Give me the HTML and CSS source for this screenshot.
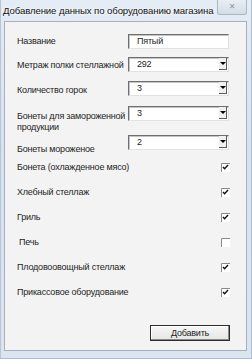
FILE: index.html
```html
<!DOCTYPE html>
<html lang="ru">
<head>
  <meta charset="UTF-8">
  <title>Добавление данных по оборудованию магазина</title>
  <link rel="stylesheet" href="styles.css">
</head>
<body>
  <div class="window">
    <div class="titlebar">
      <span class="title">Добавление данных по оборудованию магазина</span>
      <span class="close">✕</span>
    </div>
    <div class="client">
      <div class="field">
        <span class="label lbl-1">Название</span>
        <div class="textbox">Пятый</div>
      </div>
      <div class="field gap-8">
        <span class="label lbl-2">Метраж полки стеллажной</span>
        <div class="combo"><span class="value">292</span><span class="arrow"></span></div>
      </div>
      <div class="field gap-9">
        <span class="label lbl-3">Количество горок</span>
        <div class="combo"><span class="value">3</span><span class="arrow"></span></div>
      </div>
      <div class="field gap-10">
        <span class="label lbl-4">Бонеты для замороженной<br>продукции</span>
        <div class="combo"><span class="value">3</span><span class="arrow"></span></div>
      </div>
      <div class="field gap-14">
        <span class="label lbl-5">Бонеты мороженое</span>
        <div class="combo"><span class="value">2</span><span class="arrow"></span></div>
      </div>

      <div class="checks">
        <div class="check-row">
          <span class="label">Бонета (охлажденное мясо)</span>
          <svg class="checkbox" width="9" height="9" viewBox="0 0 9 9"><rect x="0" y="0" width="9" height="9" fill="#fff"/><path d="M0.5 9V0.5H9" fill="none" stroke="#8a8a8a"/><path d="M2 4l1.6 1.8L7 2" fill="none" stroke="#111" stroke-width="1.4"/></svg>
        </div>
        <div class="check-row">
          <span class="label">Хлебный стеллаж</span>
          <svg class="checkbox" width="9" height="9" viewBox="0 0 9 9"><rect x="0" y="0" width="9" height="9" fill="#fff"/><path d="M0.5 9V0.5H9" fill="none" stroke="#8a8a8a"/><path d="M2 4l1.6 1.8L7 2" fill="none" stroke="#111" stroke-width="1.4"/></svg>
        </div>
        <div class="check-row">
          <span class="label">Гриль</span>
          <svg class="checkbox" width="9" height="9" viewBox="0 0 9 9"><rect x="0" y="0" width="9" height="9" fill="#fff"/><path d="M0.5 9V0.5H9" fill="none" stroke="#8a8a8a"/><path d="M2 4l1.6 1.8L7 2" fill="none" stroke="#111" stroke-width="1.4"/></svg>
        </div>
        <div class="check-row">
          <span class="label indent">Печь</span>
          <svg class="checkbox" width="9" height="9" viewBox="0 0 9 9"><rect x="0" y="0" width="9" height="9" fill="#fff"/><path d="M0.5 9V0.5H9" fill="none" stroke="#8a8a8a"/></svg>
        </div>
        <div class="check-row">
          <span class="label">Плодовоовощный стеллаж</span>
          <svg class="checkbox" width="9" height="9" viewBox="0 0 9 9"><rect x="0" y="0" width="9" height="9" fill="#fff"/><path d="M0.5 9V0.5H9" fill="none" stroke="#8a8a8a"/><path d="M2 4l1.6 1.8L7 2" fill="none" stroke="#111" stroke-width="1.4"/></svg>
        </div>
        <div class="check-row">
          <span class="label">Прикассовое оборудование</span>
          <svg class="checkbox" width="9" height="9" viewBox="0 0 9 9"><rect x="0" y="0" width="9" height="9" fill="#fff"/><path d="M0.5 9V0.5H9" fill="none" stroke="#8a8a8a"/><path d="M2 4l1.6 1.8L7 2" fill="none" stroke="#111" stroke-width="1.4"/></svg>
        </div>
      </div>

      <div class="actions">
        <button class="button">Добавить</button>
      </div>
    </div>
  </div>
</body>
</html>
```

FILE: styles.css
```css
body {
  margin: 0;
  background: #dde7f2;
  font-family: "Liberation Sans", Arial, sans-serif;
  font-size: 9px;
  letter-spacing: -0.2px;
  color: #1e1e1e;
}
.window {
  width: 252px;
  height: 359px;
  box-sizing: border-box;
  background: linear-gradient(to bottom, #e4ecf5 0%, #d6e2ef 40%, #dbe5f0 100%);
  border-left: 1px solid #b7c5d6;
  border-right: 1px solid #aebdcf;
  border-bottom: 1px solid #aebdcf;
  overflow: hidden;
}
.titlebar {
  height: 21px;
  display: flex;
  align-items: flex-start;
}
.title {
  flex: 1;
  min-width: 0;
  font-size: 9.6px;
  letter-spacing: -0.1px;
  line-height: 13px;
  padding: 4px 0 0 2px;
  color: #111;
  white-space: nowrap;
  overflow: hidden;
  text-shadow: 0 0 4px #fff, 0 0 2px #fff;
}
.close {
  flex: none;
  width: 30px;
  height: 15px;
  margin-right: 4px;
  box-sizing: border-box;
  border: 1px solid #a9b6c6;
  border-top: none;
  border-radius: 0 0 3px 3px;
  background: linear-gradient(to bottom, #e9eef4, #d3dce6);
  color: #8c97a5;
  font-family: "DejaVu Sans", sans-serif;
  font-size: 8px;
  line-height: 14px;
  text-align: center;
}

.client {
  margin: 0 4px 0 3px;
  height: 330px;
  box-sizing: border-box;
  background: #f3f3f3;
  border: 1px solid #a7b1bd;
  padding: 12px 15px 0 12px;
}

.field {
  display: flex;
  align-items: flex-start;
  height: 15px;
}
.gap-8 { margin-top: 8px; }
.gap-9 { margin-top: 9px; }
.gap-10 { margin-top: 10px; }
.gap-14 { margin-top: 14px; }

.label {
  line-height: 13px;
  white-space: nowrap;
}
.field .label {
  width: 111px;
  flex: none;
}
.lbl-1 { padding-top: 1px; }
.lbl-2 { padding-top: 2px; }
.lbl-3 { padding-top: 3px; }
.lbl-4 {
  padding-top: 5px;
  line-height: 11px;
}
.lbl-5 { padding-top: 8px; }

.textbox,
.combo {
  width: 101px;
  height: 15px;
  box-sizing: border-box;
  background: #fff;
  border: 1px solid;
  border-color: #6f6f6f #e2e2e2 #e2e2e2 #6f6f6f;
  box-shadow: inset 1px 1px 0 #c4c4c4;
  line-height: 12px;
  padding-left: 8px;
}
.combo {
  display: flex;
  padding-right: 1px;
}
.combo .value {
  flex: 1;
}
.arrow {
  width: 8px;
  height: 12px;
  box-sizing: border-box;
  border-right: 1px solid #5a5a5a;
  border-bottom: 1px solid #5a5a5a;
  background: #f0f0f0;
  position: relative;
}
.arrow::after {
  content: "";
  position: absolute;
  left: 1px;
  top: 4px;
  border-left: 3px solid transparent;
  border-right: 3px solid transparent;
  border-top: 3px solid #000;
}

.checks {
  margin-top: 5px;
}
.check-row {
  height: 25px;
  display: flex;
  align-items: center;
  justify-content: space-between;
}
.indent {
  padding-left: 2px;
}
.checkbox {
  flex: none;
  margin-right: 1px;
}

.actions {
  display: flex;
  justify-content: flex-end;
  margin-top: 20px;
}
.button {
  width: 80px;
  height: 16px;
  margin-right: 1px;
  padding: 0;
  font-family: inherit;
  font-size: 9px;
  letter-spacing: -0.2px;
  color: #1e1e1e;
  background: linear-gradient(to bottom, #f6f6f6, #e6e6e6);
  border: 1px solid #2c2c2c;
  box-shadow: inset -1px -1px 0 #8a8a8a, inset 1px 1px 0 #fff;
}
```
